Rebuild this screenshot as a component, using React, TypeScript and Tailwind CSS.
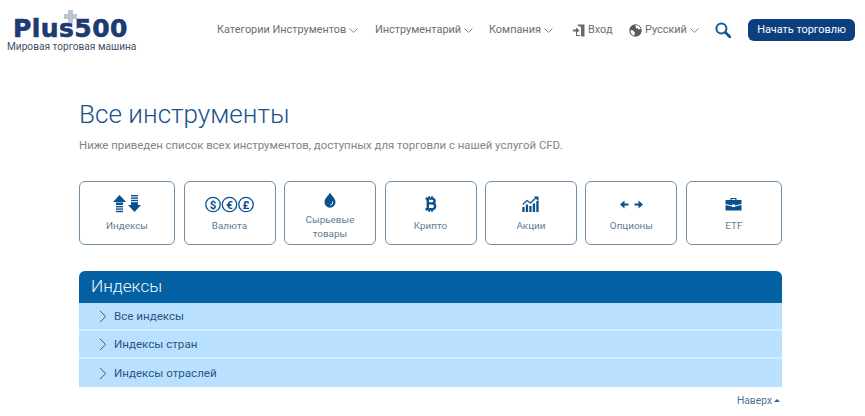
import { ReactNode } from 'react';

function Chevron() {
  return (
    <svg width="9" height="5" viewBox="0 0 9 5" fill="none" stroke="#767b82" strokeWidth="0.9">
      <path d="M0.5 0.5 L4.5 4.5 L8.5 0.5" />
    </svg>
  );
}

function NavItem({ label, chevron = true }: { label: string; chevron?: boolean }) {
  return (
    <div className="flex items-center gap-[3px] pt-[1px] text-[10.9px] leading-none text-[#6a6e74]">
      {label}
      {chevron && <Chevron />}
    </div>
  );
}

function IndexIcon() {
  return (
    <svg width="30" height="18" viewBox="0 0 30 18" fill="#0b4f8f">
      <path d="M7.5 0 L14 7 L1 7 Z" />
      <rect x="4" y="7.5" width="7" height="2.5" />
      <rect x="4" y="11" width="7" height="1.4" />
      <rect x="4" y="13.4" width="7" height="1.4" />
      <rect x="4" y="15.8" width="7" height="1.4" />
      <rect x="19" y="0" width="7" height="1.4" />
      <rect x="19" y="2.4" width="7" height="1.4" />
      <rect x="19" y="4.8" width="7" height="1.4" />
      <rect x="19" y="7.2" width="7" height="3" />
      <path d="M22.5 17 L16 10 L29 10 Z" />
    </svg>
  );
}

function CurrencyIcon() {
  const coins: [number, string][] = [[8, '$'], [24.5, '€'], [41, '£']];
  return (
    <svg width="49" height="17" viewBox="0 0 49 17">
      {coins.map(([cx, sign]) => (
        <g key={sign}>
          <circle cx={cx} cy="8.5" r="7.2" fill="none" stroke="#0b4f8f" strokeWidth="1.3" />
          <text x={cx} y="12.6" textAnchor="middle" fontSize="11.5" fontWeight="700" fill="#0b4f8f" fontFamily="Roboto, sans-serif">
            {sign}
          </text>
        </g>
      ))}
    </svg>
  );
}

function DropIcon() {
  return (
    <svg width="12" height="16" viewBox="0 0 12 16">
      <path d="M6 0.5 C7.5 3.5 11.5 6.5 11.5 10.2 A5.5 5.5 0 0 1 0.5 10.2 C0.5 6.5 4.5 3.5 6 0.5 Z" fill="#0b4f8f" />
      <path d="M8.8 9.5 A3.2 3.2 0 0 1 6.3 13.2" fill="none" stroke="#ffffff" strokeWidth="1" />
    </svg>
  );
}

function BitcoinIcon() {
  return (
    <svg width="12" height="16" viewBox="0 0 12 16" fill="none" stroke="#0b4f8f">
      <path d="M0.5 2.6 H7 C10.4 2.6 10.4 7.4 7 7.4 H2.5 M7 7.4 C11.2 7.4 11.2 13.2 7 13.2 H0.5 M2.8 2.6 V13.2" strokeWidth="2.4" />
      <path d="M4.2 0 V2.5 M7 0 V2.5 M4.2 13.2 V16 M7 13.2 V16" strokeWidth="1.5" />
    </svg>
  );
}

function StocksIcon() {
  return (
    <svg width="17" height="16" viewBox="0 0 17 16" fill="#0b4f8f">
      <rect x="0.3" y="11" width="2.3" height="5" />
      <rect x="3.8" y="8.5" width="2.3" height="7.5" />
      <rect x="7.3" y="10" width="2.3" height="6" />
      <rect x="10.8" y="7.5" width="2.3" height="8.5" />
      <rect x="14.3" y="5" width="2.3" height="11" />
      <path d="M0.8 8.5 L5 4.5 L8.5 7 L14 1.8" fill="none" stroke="#0b4f8f" strokeWidth="1.3" />
      <path d="M11.8 0.5 H16.5 V5.2 Z" />
    </svg>
  );
}

function OptionsIcon() {
  return (
    <svg width="23" height="9" viewBox="0 0 23 9" fill="#0b4f8f">
      <path d="M0 4.5 L4.5 0.5 V3.5 H8.5 V5.5 H4.5 V8.5 Z" />
      <path d="M23 4.5 L18.5 0.5 V3.5 H14.5 V5.5 H18.5 V8.5 Z" />
    </svg>
  );
}

function BriefcaseIcon() {
  return (
    <svg width="17" height="14" viewBox="0 0 17 14" fill="#0b4f8f">
      <path d="M5.5 3 V1 H11.5 V3 H10.3 V2.1 H6.7 V3 Z" />
      <path d="M0.5 3 H16.5 V7 L10 8.4 V7.5 H7 V8.4 L0.5 7 Z" />
      <path d="M0.5 8 L7 9.4 V10 H10 V9.4 L16.5 8 V13.5 H0.5 Z" />
    </svg>
  );
}

function LoginIcon() {
  return (
    <svg width="12" height="13" viewBox="0 0 12 13" fill="#666a70">
      <path d="M4.5 0.5 H11.5 V12.5 H8 V3 L4.5 1.5 Z" />
      <path d="M0 5.5 H3 V3.5 L6.5 6.5 L3 9.5 V7.5 H0 Z" />
      <path d="M4 9 V11 H7 V12 H3 V9 Z" />
    </svg>
  );
}

function GlobeIcon() {
  return (
    <svg width="13" height="13" viewBox="0 0 13 13">
      <circle cx="6.5" cy="6.5" r="6.2" fill="#565b61" />
      <path d="M6.5 1 C8.5 1 11 2.5 11.8 5 L9.5 5.5 L8.5 4 L7 4.5 Z" fill="#ffffff" />
      <path d="M1.5 6 L4 6.5 L6 8.5 L5 11.8 C3 11.2 1.2 8.8 1.5 6 Z" fill="#ffffff" />
    </svg>
  );
}

function SearchIcon() {
  return (
    <svg width="16" height="16" viewBox="0 0 16 16" fill="none" stroke="#0f5c9c">
      <circle cx="6.4" cy="6.4" r="5" strokeWidth="2" />
      <path d="M10.2 10.2 L15 15" strokeWidth="2.8" strokeLinecap="round" />
    </svg>
  );
}

function RowChevron() {
  return (
    <svg width="8" height="13" viewBox="0 0 8 13" fill="none" stroke="#2f5a85" strokeWidth="1">
      <path d="M1 0.8 L6.6 6.5 L1 12.2" />
    </svg>
  );
}

function CategoryCard({ icon, label, width }: { icon: ReactNode; label: ReactNode; width: string }) {
  return (
    <div className={`${width} h-[64px] shrink-0 flex flex-col items-center rounded-[6px] border border-[#6f8fa9] bg-white`}>
      <div className="h-[36px] flex items-center justify-center pt-[8px]">{icon}</div>
      <div className="mt-[1px] text-center text-[9.9px] leading-[13.5px] text-[#647c94]">{label}</div>
    </div>
  );
}

function ListRow({ label }: { label: string }) {
  return (
    <div className="h-[28px] flex items-center gap-[7px] pl-[20px] pt-[1px] bg-[#b9e1ff] border-b-2 border-[#d3ecff] last:border-b-0 text-[11.6px] text-[#2a5580]">
      <RowChevron />
      {label}
    </div>
  );
}

export default function App() {
  return (
    <div className="w-[865px] h-[416px] overflow-hidden bg-white font-['Roboto',sans-serif]">
      {/* Header */}
      <header className="h-[60px] flex items-center">
        <div className="relative w-[217px] h-[60px] shrink-0">
          <div className="absolute left-[64px] top-[10px] w-[13px] h-[13px]">
            <div className="absolute left-[4px] top-0 w-[5px] h-[13px] bg-[#bcc6d2]" />
            <div className="absolute left-0 top-[4px] w-[13px] h-[5px] bg-[#bcc6d2]" />
          </div>
          <div className="absolute left-[13px] top-[20px] text-[25px] leading-[18px] font-black tracking-[0.45px] [-webkit-text-stroke:0.6px_#1d3a72] text-[#1d3a72] font-['DejaVu_Sans',sans-serif]">
            Plus500
          </div>
          <div className="absolute left-[7px] top-[40px] text-[10.15px] leading-[13px] text-[#3f4f68]">Мировая торговая машина</div>
        </div>
        <nav className="flex items-center">
          <div className="w-[158px]"><NavItem label="Категории Инструментов" /></div>
          <div className="w-[114px]"><NavItem label="Инструментарий" /></div>
          <div className="w-[83px]"><NavItem label="Компания" /></div>
          <div className="w-[57px] flex items-center gap-[3px] pl-[1px]">
            <LoginIcon />
            <NavItem label="Вход" chevron={false} />
          </div>
          <div className="w-[86px] flex items-center gap-[3px]">
            <GlobeIcon />
            <NavItem label="Русский" />
          </div>
          <div className="w-[33px]">
            <SearchIcon />
          </div>
          <div className="w-[107px] h-[22px] rounded-[6px] bg-[#0b3f80] flex items-center justify-center text-[10.9px] text-white">
            Начать торговлю
          </div>
        </nav>
      </header>

      {/* Content */}
      <main className="ml-[79px] w-[703px]">
        <h1 className="mt-[38px] text-[26.1px] leading-[32px] font-light text-[#1d5288]">Все инструменты</h1>
        <p className="mt-[7px] text-[11.4px] leading-[16px] text-[#808488]">
          Ниже приведен список всех инструментов, доступных для торговли с нашей услугой CFD.
        </p>

        <div className="mt-[28px] flex gap-[8.5px]">
          <CategoryCard width="w-[96px]" icon={<IndexIcon />} label="Индексы" />
          <CategoryCard width="w-[92px]" icon={<CurrencyIcon />} label="Валюта" />
          <CategoryCard
            width="w-[92px]"
            icon={<div className="-mt-[9px]"><DropIcon /></div>}
            label={<div className="-mt-[6px]">Сырьевые<br />товары</div>}
          />
          <CategoryCard width="w-[92px]" icon={<BitcoinIcon />} label="Крипто" />
          <CategoryCard width="w-[91.9px]" icon={<StocksIcon />} label="Акции" />
          <CategoryCard width="w-[92px]" icon={<OptionsIcon />} label="Опционы" />
          <CategoryCard width="w-[96px]" icon={<BriefcaseIcon />} label="ETF" />
        </div>

        <section className="mt-[26px]">
          <div className="h-[32px] rounded-t-[6px] bg-[#0361a3] flex items-center pl-[12px] text-[17.2px] font-light text-[#f2f8fc]">Индексы</div>
          <ListRow label="Все индексы" />
          <ListRow label="Индексы стран" />
          <ListRow label="Индексы отраслей" />
        </section>

        <div className="mt-[7px] flex items-center justify-end gap-[2px] pr-[2px] text-[10.3px] leading-[13px] text-[#4f7196]">
          Наверх
          <span className="w-0 h-0 border-x-[3px] border-x-transparent border-b-[3px] border-b-[#3a5f88]" />
        </div>
      </main>
    </div>
  );
}
